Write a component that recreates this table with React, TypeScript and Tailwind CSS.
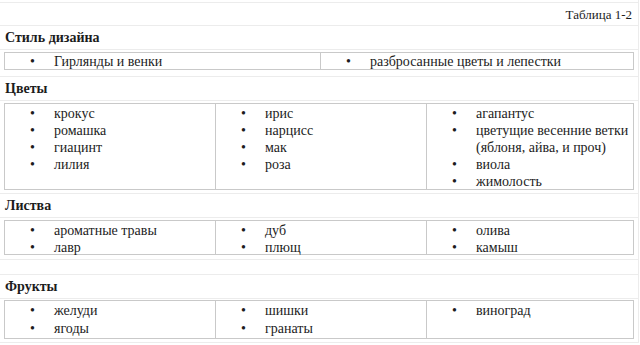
const FONT = "font-['Liberation_Serif','Times_New_Roman',serif]";

type Section = {
  cols: string[][];
  widths: string[];
  tableHeight: string;
  lineHeight: string;
};

const BulletList = ({ items, lh }: { items: string[]; lh: string }) => (
  <ul className="pl-[25px]">
    {items.map((item, i) => (
      <li key={i} className={`flex ${lh}`}>
        <span className="w-[24px] shrink-0">•</span>
        <span>{item}</span>
      </li>
    ))}
  </ul>
);

const InnerTable = ({ s }: { s: Section }) => (
  <div className={`mx-[4px] flex border border-[#c9c9c9] ${s.tableHeight}`}>
    {s.cols.map((col, i) => (
      <div
        key={i}
        className={`${s.widths[i]} ${i > 0 ? "border-l border-[#c9c9c9]" : ""} pt-[1px]`}
      >
        <BulletList items={col} lh={s.lineHeight} />
      </div>
    ))}
  </div>
);

const HEADING = "px-[5px] font-bold text-[14px] leading-[17px]";

export default function App() {
  return (
    <div className={`${FONT} w-[640px] h-[345px] overflow-hidden bg-white text-[14px] text-[#1c1c1c]`}>
      <div className="w-[639px] border-r border-[#ececec] pt-[2px]">
        {/* caption */}
        <div className="h-[24px] border-t border-b border-[#ececec] flex items-center justify-end pr-[6px] text-[13px] leading-[17px]">
          Таблица 1-2
        </div>

        {/* Стиль дизайна */}
        <div className="h-[24px] border-b border-[#ececec] flex items-center">
          <span className={HEADING}>Стиль дизайна</span>
        </div>
        <div className="h-[27px] border-b border-[#ececec] pt-[2px]">
          <InnerTable
            s={{
              cols: [["Гирлянды и венки"], ["разбросанные цветы и лепестки"]],
              widths: ["w-[315px]", "flex-1"],
              tableHeight: "h-[18px]",
              lineHeight: "leading-[16px]",
            }}
          />
        </div>

        {/* Цветы */}
        <div className="h-[24px] border-b border-[#ececec] flex items-center">
          <span className={HEADING}>Цветы</span>
        </div>
        <div className="h-[93px] border-b border-[#ececec] pt-[2px]">
          <InnerTable
            s={{
              cols: [
                ["крокус", "ромашка", "гиацинт", "лилия"],
                ["ирис", "нарцисс", "мак", "роза"],
                ["агапантус", "цветущие весенние ветки (яблоня, айва, и проч)", "виола", "жимолость"],
              ],
              widths: ["w-[210px]", "w-[211px]", "flex-1"],
              tableHeight: "h-[87px]",
              lineHeight: "leading-[17px]",
            }}
          />
        </div>

        {/* Листва */}
        <div className="h-[24px] border-b border-[#ececec] flex items-center">
          <span className={HEADING}>Листва</span>
        </div>
        <div className="h-[42px] border-b border-[#ececec] pt-[2px]">
          <InnerTable
            s={{
              cols: [
                ["ароматные травы", "лавр"],
                ["дуб", "плющ"],
                ["олива", "камыш"],
              ],
              widths: ["w-[210px]", "w-[211px]", "flex-1"],
              tableHeight: "h-[35px]",
              lineHeight: "leading-[17px]",
            }}
          />
        </div>
        <div className="h-[15px] border-b border-[#ececec]" />

        {/* Фрукты */}
        <div className="h-[24px] border-b border-[#ececec] flex items-center">
          <span className={HEADING}>Фрукты</span>
        </div>
        <div className="h-[44px] border-b border-[#ececec] pt-[1px]">
          <InnerTable
            s={{
              cols: [
                ["желуди", "ягоды"],
                ["шишки", "гранаты"],
                ["виноград"],
              ],
              widths: ["w-[210px]", "w-[211px]", "flex-1"],
              tableHeight: "h-[39px]",
              lineHeight: "leading-[18px]",
            }}
          />
        </div>
      </div>
    </div>
  );
}
